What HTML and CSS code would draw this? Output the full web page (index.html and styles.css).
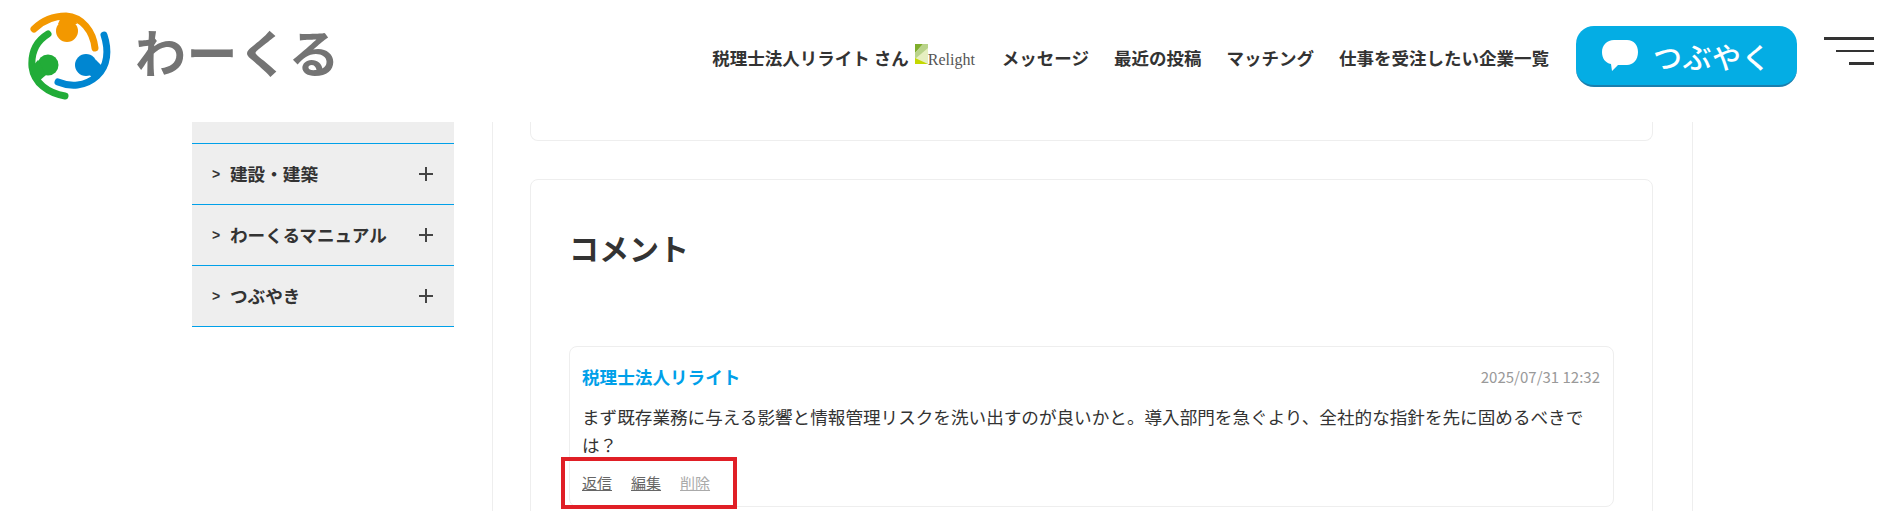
FILE: index.html
```html
<!DOCTYPE html>
<html lang="ja">

<head>
    <meta charset="UTF-8">
    <title>わーくる</title>
    <link rel="stylesheet" href="styles.css">
</head>

<body>
    <header class="header">
        <a class="logo" href="#">
            <svg class="logo_mark" viewBox="25 10 90 90" width="90" height="90">
                <g fill="none" stroke-width="7" stroke-linecap="round">
                    <path stroke="#f39800" d="M34 29C44 19 56 16 66 16C82 17 93 31 95 48" />
                    <path stroke="#0086d1" d="M104 35C109 50 108 66 97 76C85 87 70 87 58 82" />
                    <path stroke="#22ac38" d="M48 34C35 42 31 54 32 67C34 83 48 93 65 96" />
                </g>
                <circle cx="67" cy="31" r="11" fill="#f39800" />
                <circle cx="86" cy="65" r="11" fill="#0086d1" />
                <circle cx="48" cy="65" r="10.5" fill="#22ac38" />
                <path fill="#0086d1" d="M88 74L96 60L104 68L96 80Z" />
                <path fill="#22ac38" d="M46 75L38 60L31 68L38 82Z" />
                <path fill="#f39800" d="M58 24L62 15L74 15L77 24Z" />
            </svg>
            <span class="logo_text">わーくる</span>
        </a>
        <nav class="nav">
            <a class="nav_user" href="#">税理士法人リライト さん
                <span class="relight">
                    <svg class="relight_mark" viewBox="0 0 13 20" width="13" height="20">
                        <rect width="13" height="20" fill="#e6efc0" />
                        <path fill="#7fae2c" d="M0 0H8L0 9Z" />
                        <path fill="#b9d38a" d="M8 0H13V4L0 15V9Z" />
                        <path fill="#c4d800" d="M0 14L13 20H0Z" />
                    </svg>
                    Relight
                </span>
            </a>
            <a href="#">メッセージ</a>
            <a href="#">最近の投稿</a>
            <a href="#">マッチング</a>
            <a href="#">仕事を受注したい企業一覧</a>
        </nav>
        <a class="btn_tweet" href="#">
            <svg viewBox="0 0 36 31" width="36" height="31">
                <path fill="#fff" d="M12 0H25C32 0 36 5 36 12C36 20 31 25 25 25H16L10 31L9 24C3 23 0 18 0 12C0 5 5 0 12 0Z" />
            </svg>
            <span>つぶやく</span>
        </a>
        <div class="hamburger">
            <span></span>
            <span></span>
            <span></span>
        </div>
    </header>

    <div class="main">
        <aside class="side">
            <div class="side_top"></div>
            <div class="side_item"><b>&gt;</b><span>建設・建築</span><em></em></div>
            <div class="side_item"><b>&gt;</b><span>わーくるマニュアル</span><em></em></div>
            <div class="side_item"><b>&gt;</b><span>つぶやき</span><em></em></div>
        </aside>

        <div class="content">
            <div class="card card_prev"></div>
            <section class="card card_comment">
                <h2>コメント</h2>
                <div class="comment">
                    <div class="comment_head">
                        <a class="comment_name" href="#">税理士法人リライト</a>
                        <span class="comment_date">2025/07/31 12:32</span>
                    </div>
                    <p class="comment_body">まず既存業務に与える影響と情報管理リスクを洗い出すのが良いかと。導入部門を急ぐより、全社的な指針を先に固めるべきでは？</p>
                    <div class="comment_actions">
                        <a href="#">返信</a>
                        <a href="#">編集</a>
                        <a class="disabled" href="#">削除</a>
                        <div class="red_box"></div>
                    </div>
                </div>
            </section>
        </div>
    </div>
</body>

</html>
```

FILE: styles.css
```css
* {
    margin: 0px;
    padding: 0px;
    box-sizing: border-box;
}

html,
body {
    height: 511px;
    overflow: hidden;
}

body {
    background: white;
    color: #333333;
    font-family: "Noto Sans CJK JP", "Noto Sans", sans-serif;
}

a {
    color: inherit;
    text-decoration: none;
}

.header {
    height: 122px;
    display: flex;
    align-items: flex-start;
    padding-right: 18px;
}

.logo {
    display: flex;
    margin-left: 25px;
    margin-top: 10px;
}

.logo_text {
    margin-left: 20px;
    margin-top: 10px;
    font-size: 51px;
    line-height: 62px;
    letter-spacing: 0.5px;
    font-weight: 700;
    color: #747474;
}

.nav {
    display: flex;
    align-items: center;
    gap: 25px;
    height: 114px;
    margin-left: auto;
    font-size: 17.5px;
    font-weight: 700;
    white-space: nowrap;
}

.nav_user {
    display: flex;
    align-items: center;
    gap: 6px;
    margin-right: 2px;
}

.relight {
    display: flex;
    align-items: flex-end;
    height: 26px;
    font-family: "Liberation Serif", serif;
    font-size: 16px;
    line-height: 21px;
    font-weight: 400;
    color: #555555;
}

.relight_mark {
    margin-bottom: 6px;
}

.btn_tweet {
    display: flex;
    align-items: center;
    gap: 15px;
    width: 221px;
    height: 61px;
    margin-top: 26px;
    margin-left: 27px;
    padding-left: 26px;
    background: #04ade4;
    border-bottom: 2px solid #1a7fae;
    border-radius: 18px;
    color: white;
    font-size: 29px;
    letter-spacing: 0.5px;
    font-weight: 500;
}

.hamburger {
    width: 50px;
    margin-top: 37px;
    margin-left: 27px;
    display: flex;
    flex-direction: column;
    align-items: flex-end;
    gap: 10px;
}

.hamburger span {
    display: block;
    height: 2.5px;
    background: #333333;
}

.hamburger span:nth-child(1) {
    width: 50px;
}

.hamburger span:nth-child(2) {
    width: 38px;
}

.hamburger span:nth-child(3) {
    width: 25px;
}

.main {
    display: flex;
    padding-left: 192px;
}

.side {
    width: 262px;
}

.side_top {
    height: 21px;
    background: #eeeeee;
}

.side_item {
    height: 61px;
    display: flex;
    align-items: center;
    padding-left: 20px;
    padding-right: 21px;
    background: #eeeeee;
    border-top: 1px solid #00a0e9;
    font-size: 17.6px;
    font-weight: 700;
}

.side_item:last-child {
    height: 62px;
    border-bottom: 1px solid #00a0e9;
}

.side_item b {
    width: 18px;
    font-family: "Liberation Sans", sans-serif;
    font-size: 14px;
}

.side_item span {
    flex: 1;
    margin-bottom: 2px;
}

/* 加号 */
.side_item em {
    position: relative;
    width: 14px;
    height: 14px;
}

.side_item em::before,
.side_item em::after {
    content: "";
    position: absolute;
    background: #444444;
}

.side_item em::before {
    left: 0px;
    right: 0px;
    top: 6px;
    height: 2px;
}

.side_item em::after {
    top: 0px;
    bottom: 0px;
    left: 6px;
    width: 2px;
}

.content {
    width: 1201px;
    margin-left: 38px;
    padding: 0px 39px 0px 37px;
    border-left: 1px solid #eeeeee;
    border-right: 1px solid #eeeeee;
}

.card {
    border: 1px solid #eeeeee;
    border-radius: 8px;
}

.card_prev {
    height: 19px;
    border-top: none;
    border-radius: 0px 0px 8px 8px;
}

.card_comment {
    margin-top: 38px;
    padding: 0px 38px 40px 38px;
}

.card_comment h2 {
    margin-top: 43px;
    height: 123px;
    font-size: 30px;
    line-height: 48px;
    font-weight: 700;
}

.comment {
    height: 161px;
    padding: 13px 13px 0px 12px;
    border: 1px solid #eeeeee;
    border-radius: 8px;
}

.comment_head {
    display: flex;
    justify-content: space-between;
    align-items: center;
    height: 32px;
}

.comment_name {
    color: #00a0e9;
    font-size: 17.6px;
    font-weight: 700;
}

.comment_date {
    color: #999999;
    font-size: 15px;
}

.comment_body {
    margin-top: 11px;
    font-size: 17.6px;
    line-height: 28px;
}

.comment_actions {
    position: relative;
    display: flex;
    gap: 19px;
    margin-top: 11px;
    font-size: 15px;
    line-height: 26px;
}

.comment_actions a {
    color: #666666;
    text-decoration: underline;
}

.comment_actions a.disabled {
    color: #aaaaaa;
}

.red_box {
    position: absolute;
    left: -21px;
    top: -13px;
    width: 176px;
    height: 52px;
    border: 4px solid #e01f26;
}
```
